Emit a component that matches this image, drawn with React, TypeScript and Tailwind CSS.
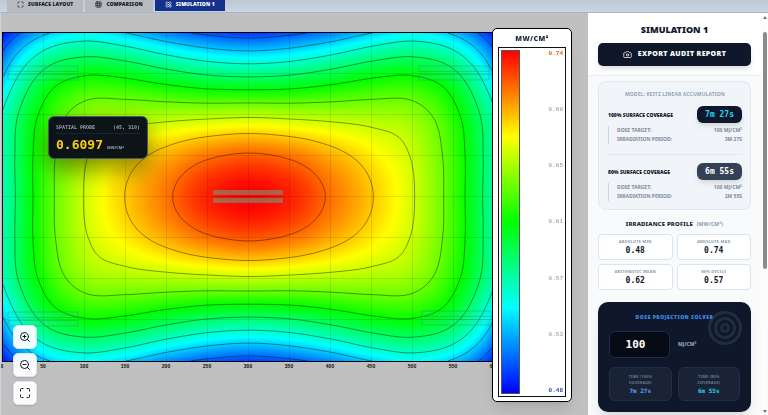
import { useEffect, useRef, useState } from "react";
import type { ReactNode } from "react";
import { Atom, Camera, Grid3x3, Maximize, ZoomIn, ZoomOut } from "lucide-react";

const W = 492;
const H = 328;
const STEP = 41;

// normalised irradiance for one quadrant, rows go from the room centre outwards
const QUADRANT = [
  [1, 0.97, 0.888, 0.803, 0.705, 0.555, 0.32],
  [0.912, 0.888, 0.83, 0.766, 0.692, 0.553, 0.325],
  [0.684, 0.676, 0.668, 0.66, 0.64, 0.525, 0.31],
  [0.378, 0.392, 0.432, 0.477, 0.492, 0.42, 0.19],
  [0.06, 0.083, 0.13, 0.2, 0.243, 0.185, 0.02],
];

function at(values: number[], i: number) {
  const n = values.length - 1;
  if (i < 0) return values[-i];
  if (i > n) return 3 * values[n] - 3 * values[n - 1] + values[n - 2];
  return values[i];
}

function spline(values: number[], pos: number) {
  const i = Math.min(Math.floor(pos), values.length - 2);
  const t = pos - i;
  const a = at(values, i - 1);
  const b = at(values, i);
  const c = at(values, i + 1);
  const d = at(values, i + 2);
  return b + 0.5 * t * (c - a + t * (2 * a - 5 * b + 4 * c - d + t * (3 * (b - c) + d - a)));
}

function irradiance(x: number, y: number) {
  const u = Math.abs(x - W / 2) / STEP;
  const v = Math.abs(y - H / 2) / STEP;
  return spline(
    QUADRANT.map((row) => spline(row, u)),
    v
  );
}

const STOPS = [
  [0, 0, 255],
  [0, 255, 255],
  [0, 255, 0],
  [255, 255, 0],
  [255, 0, 0],
];

function rainbow(value: number) {
  const p = Math.max(0, Math.min(0.9999, value)) * 4;
  const i = Math.floor(p);
  return STOPS[i].map((c, k) => c + (STOPS[i + 1][k] - c) * (p - i));
}

// marching squares, one path string for every level
function contours() {
  const cell = 4;
  const cols = W / cell;
  const rows = H / cell;
  const grid: number[][] = [];
  for (let j = 0; j <= rows; j++) {
    grid.push([]);
    for (let i = 0; i <= cols; i++) grid[j].push(irradiance(i * cell, j * cell));
  }
  let path = "";
  for (let k = 1; k < 10; k++) {
    const level = k / 10;
    for (let j = 0; j < rows; j++) {
      for (let i = 0; i < cols; i++) {
        const corners = [
          [i, j, grid[j][i]],
          [i + 1, j, grid[j][i + 1]],
          [i + 1, j + 1, grid[j + 1][i + 1]],
          [i, j + 1, grid[j + 1][i]],
        ];
        const hits: string[] = [];
        for (let e = 0; e < 4; e++) {
          const [x0, y0, a] = corners[e];
          const [x1, y1, b] = corners[(e + 1) % 4];
          if (a < level !== b < level) {
            const t = (level - a) / (b - a);
            hits.push(`${((x0 + (x1 - x0) * t) * cell).toFixed(2)} ${((y0 + (y1 - y0) * t) * cell).toFixed(2)}`);
          }
        }
        for (let h = 0; h + 1 < hits.length; h += 2) path += `M${hits[h]}L${hits[h + 1]}`;
      }
    }
  }
  return path;
}

const CONTOURS = contours();

const LAMPS = [
  [5, 33],
  [416, 33],
  [5, 279],
  [419, 278],
];

function HeatMap() {
  const ref = useRef<HTMLCanvasElement>(null);

  useEffect(() => {
    const ctx = ref.current?.getContext("2d");
    if (!ctx) return;
    const image = ctx.createImageData(W, H);
    for (let y = 0; y < H; y++) {
      for (let x = 0; x < W; x++) {
        const [r, g, b] = rainbow(irradiance(x, y));
        image.data.set([r, g, b, 255], (y * W + x) * 4);
      }
    }
    ctx.putImageData(image, 0, 0);
  }, []);

  return (
    <div className="relative border-y border-l border-black">
      <canvas ref={ref} width={W} height={H} className="block" />
      <svg viewBox={`0 0 ${W} ${H}`} className="absolute inset-0 h-full w-full" fill="none">
        <g stroke="#000" strokeOpacity="0.1" strokeWidth="1">
          {Array.from({ length: 11 }, (_, i) => (
            <path key={i} d={`M${(i + 1) * STEP - 0.5} 0V${H}`} />
          ))}
          {Array.from({ length: 7 }, (_, i) => (
            <path key={i} d={`M0 ${(i + 1) * STEP - 0.5}H${W}`} />
          ))}
        </g>
        <path d={CONTOURS} stroke="#000" strokeOpacity="0.45" strokeWidth="0.9" />
        <g fill="#34d399" fillOpacity="0.2" stroke="#0f766e" strokeOpacity="0.4" strokeWidth="0.7">
          {LAMPS.map(([x, y]) => (
            <g key={`${x}-${y}`}>
              <rect x={x} y={y} width="70" height="5.5" />
              <rect x={x} y={y + 8.5} width="70" height="5.5" />
            </g>
          ))}
        </g>
        <g fill="#7b9975" fillOpacity="0.6" stroke="#555" strokeOpacity="0.3" strokeWidth="0.5">
          <rect x="210" y="157" width="70" height="5" />
          <rect x="210" y="165" width="70" height="5" />
        </g>
      </svg>
    </div>
  );
}

const TICKS = ["0", "50", "100", "150", "200", "250", "300", "350", "400", "450", "500", "550", "600"];

function Tab({ icon, label, active }: { icon: ReactNode; label: string; active?: boolean }) {
  return (
    <button
      className={`flex items-end gap-1 px-2.5 text-[5px] leading-[7px] font-black tracking-wide whitespace-nowrap ${
        active ? "mb-px bg-[#14328c] pb-[3px] text-white" : "bg-[#b7bbbf] pb-1 text-[#0f172a]"
      }`}
    >
      {icon}
      {label}
    </button>
  );
}

function ToolButton({ label, children }: { label: string; children: ReactNode }) {
  return (
    <button
      aria-label={label}
      className="grid h-6 w-6 place-items-center rounded-[5px] border border-[#dbe3ee] bg-white/95 text-[#0f172a] shadow"
    >
      {children}
    </button>
  );
}

function Legend() {
  const labels = ["0.74", "0.69", "0.65", "0.61", "0.57", "0.53", "0.48"];
  return (
    <div className="absolute top-[15px] right-4 bottom-[13px] flex w-20 flex-col rounded-[5px] border border-black bg-white px-[5px] pb-1 shadow-lg">
      <div className="pt-[5px] pb-[3px] text-center text-[7px] leading-[10px] font-black tracking-wider text-[#1e293b]">MW/CM²</div>
      <div className="flex flex-1 justify-between border border-[#111] p-0.5">
        <div className="w-[19px] border border-[#555] bg-[linear-gradient(to_bottom,#f00,#ff0,#0f0,#0ff,#00f)]" />
        <div className="flex flex-col justify-between font-['Liberation_Mono',monospace] text-[6px] leading-[7px] font-bold">
          {labels.map((label, i) => (
            <span key={label} className={i === 0 ? "text-[#ea580c]" : i === 6 ? "text-[#1e4fa8]" : "text-[#a8afba]"}>
              {label}
            </span>
          ))}
        </div>
      </div>
    </div>
  );
}

function Coverage({ label, time, period, dark }: { label: string; time: string; period: string; dark?: boolean }) {
  return (
    <div>
      <div className="flex items-center justify-between">
        <h3 className="text-[5px] leading-[8px] font-black whitespace-nowrap text-[#0f172a]">{label}</h3>
        <span
          className={`rounded-[6px] px-2 py-1 font-['DejaVu_Sans_Mono',monospace] text-[8px] leading-[9px] font-bold whitespace-nowrap shadow-md ${
            dark ? "bg-[#0f172a] text-[#22d3ee]" : "bg-[#334155] text-white"
          }`}
        >
          {time}
        </span>
      </div>
      <dl className="mt-[3px] grid grid-cols-[1fr_auto] border-l border-[#cbd5e1] pl-2 text-[5px] leading-[9px] font-bold text-[#7c8aa0]">
        <dt>DOSE TARGET:</dt>
        <dd className="text-right">100 MJ/CM²</dd>
        <dt>IRRADIATION PERIOD:</dt>
        <dd className="text-right">{period}</dd>
      </dl>
    </div>
  );
}

function Stat({ label, value }: { label: string; value: string }) {
  return (
    <div className="rounded-[4px] border border-[#dbe4ee] bg-white py-[3px] text-center">
      <div className="text-[4px] leading-[8px] font-extrabold tracking-wider text-[#94a3b8]">{label}</div>
      <div className="font-['DejaVu_Sans_Mono',monospace] text-[8px] leading-[10px] font-bold text-[#0f172a]">{value}</div>
    </div>
  );
}

function Projection({ label, value, color }: { label: string; value: string; color: string }) {
  return (
    <div className="rounded-[6px] border border-[#232e42] bg-[#1a2336] px-2 pt-1.5 pb-1 text-center">
      <div className="text-[4px] leading-[6px] font-bold tracking-wide text-[#64748b]">{label}</div>
      <div className={`font-['DejaVu_Sans_Mono',monospace] text-[6px] leading-[10px] font-bold ${color}`}>{value}</div>
    </div>
  );
}

function Sidebar() {
  const [dose, setDose] = useState("100");
  return (
    <aside className="flex w-[180px] shrink-0 bg-[#f8fafc]">
      <div className="min-w-0 flex-1 overflow-hidden">
        <div className="border-b border-[#e9eef4] bg-white px-2.5 pt-2.5 pb-[9px]">
          <h1 className="text-center text-[9px] leading-[13px] font-black text-[#0f172a]">SIMULATION 1</h1>
          <button className="mt-[7px] flex h-[23px] w-full items-center justify-center gap-1.5 rounded-[5px] bg-[#0f172a] text-[7px] font-black tracking-wider whitespace-nowrap text-white shadow-md">
            <Camera className="h-[9px] w-[9px]" />
            EXPORT AUDIT REPORT
          </button>
        </div>
        <div className="px-2.5 pt-[5px]">
          <section className="rounded-[8px] border border-[#e2e8f0] bg-[#f1f5f9] px-2 py-2 pl-[9px]">
            <h2 className="mb-2 text-center text-[5px] leading-[8px] font-bold tracking-wide text-[#94a3b8]">
              MODEL: KEITZ LINEAR ACCUMULATION
            </h2>
            <Coverage label="100% SURFACE COVERAGE" time="7m 27s" period="3M 27S" dark />
            <div className="mt-2.5 mb-2 border-t border-[#e2e8f0]" />
            <Coverage label="80% SURFACE COVERAGE" time="6m 55s" period="2M 55S" />
          </section>
          <h2 className="mt-2.5 mb-1.5 text-center text-[6px] leading-[8px] font-extrabold tracking-wide text-[#0f172a]">
            IRRADIANCE PROFILE <span className="ml-0.5 text-[5px] text-[#94a3b8]">(MW/CM²)</span>
          </h2>
          <div className="grid grid-cols-2 gap-1">
            <Stat label="ABSOLUTE MIN" value="0.48" />
            <Stat label="ABSOLUTE MAX" value="0.74" />
            <Stat label="ARITHMETIC MEAN" value="0.62" />
            <Stat label="80% DECILE" value="0.57" />
          </div>
          <section className="relative mt-3 rounded-[10px] bg-[#0f172a] px-[11px] py-[11px] shadow-lg">
            <svg viewBox="0 0 36 36" className="absolute top-2 right-2 h-9 w-9" fill="none" stroke="#222c3f" strokeWidth="3">
              <circle cx="18" cy="18" r="15.5" />
              <circle cx="18" cy="18" r="9.5" />
              <circle cx="18" cy="18" r="3.5" />
            </svg>
            <h2 className="relative text-center text-[5px] leading-[8px] font-black tracking-widest text-[#3b8fee]">
              DOSE PROJECTION SOLVER
            </h2>
            <div className="mt-2.5 flex items-center gap-2">
              <input
                id="dose"
                value={dose}
                onChange={(e) => setDose(e.target.value)}
                className="h-[27px] w-[61px] rounded-[6px] border border-[#1c2b4a] bg-[#060b16] pr-2 text-center font-['DejaVu_Sans_Mono',monospace] text-[11px] font-bold text-white"
              />
              <label htmlFor="dose" className="text-[5px] font-extrabold text-[#94a3b8]">
                MJ/CM²
              </label>
            </div>
            <div className="mt-[9px] grid grid-cols-2 gap-1.5">
              <Projection label="TIME (100% COVERAGE)" value="7m 27s" color="text-[#60a5fa]" />
              <Projection label="TIME (80% COVERAGE)" value="6m 55s" color="text-[#22d3ee]" />
            </div>
          </section>
        </div>
      </div>
      <div className="flex w-[7px] flex-col items-center bg-[#fcfcfc] py-0.5">
        <svg viewBox="0 0 4 3" className="mt-px h-[3px] w-1 fill-[#777]">
          <path d="M2 0L4 3H0z" />
        </svg>
        <div className="mt-[13px] h-[237px] w-1 rounded-full bg-[#8b8b8b]" />
        <svg viewBox="0 0 4 3" className="mt-auto h-[3px] w-1 fill-[#777]">
          <path d="M0 0H4L2 3z" />
        </svg>
      </div>
    </aside>
  );
}

export default function App() {
  return (
    <div className="flex h-screen flex-col overflow-hidden bg-[#c0c0c0] font-['Noto_Sans',sans-serif]">
      <nav className="flex h-[13px] shrink-0 gap-0.5 border-b border-[#a6b5cf] bg-linear-to-b from-[#bec9d5] to-[#cad5e2] pl-[7px]">
        <Tab icon={<Maximize className="h-[7px] w-[7px]" />} label="SURFACE LAYOUT" />
        <Tab icon={<Grid3x3 className="h-[7px] w-[7px]" />} label="COMPARISON" />
        <Tab icon={<Atom className="h-[7px] w-[7px]" />} label="SIMULATION 1" active />
      </nav>
      <div className="flex min-h-0 flex-1">
        <main className="relative min-w-0 flex-1 overflow-hidden border-l border-[#c9d5e4] pt-[19px] pl-px">
          <div className="w-[493px]">
            <HeatMap />
            <div className="flex font-['Liberation_Sans',sans-serif] text-[5px] leading-[9px] font-bold text-[#111]">
              {TICKS.map((tick) => (
                <span key={tick} className="flex w-[41px] shrink-0">
                  <span className="flex w-0 justify-center">{tick}</span>
                </span>
              ))}
            </div>
          </div>

          <div className="absolute top-[103px] left-[47px] w-[100px] rounded-[6px] border border-[#475569] bg-[#0c1418] px-[7px] py-1.5 font-['DejaVu_Sans_Mono',monospace] shadow-[0_10px_24px_rgba(0,0,0,0.45)]">
            <div className="flex justify-between border-b border-[#1a242c] pb-0.5 text-[5px] leading-[8px] font-bold text-[#98a2ae]">
              <span>SPATIAL PROBE</span>
              <span>(45, 310)</span>
            </div>
            <div className="mt-1 flex items-baseline gap-1">
              <span className="text-[13px] leading-[14px] font-bold text-[#facc15]">0.6097</span>
              <span className="font-['Noto_Sans',sans-serif] text-[4px] font-bold text-[#94a3b8]">MW/CM²</span>
            </div>
          </div>

          <div className="absolute bottom-2.5 left-3 flex flex-col gap-1">
            <ToolButton label="Zoom in">
              <ZoomIn className="h-3 w-3" />
            </ToolButton>
            <ToolButton label="Zoom out">
              <ZoomOut className="h-3 w-3" />
            </ToolButton>
            <ToolButton label="Fit to screen">
              <Maximize className="h-3 w-3" />
            </ToolButton>
          </div>

          <Legend />
        </main>
        <Sidebar />
      </div>
    </div>
  );
}
